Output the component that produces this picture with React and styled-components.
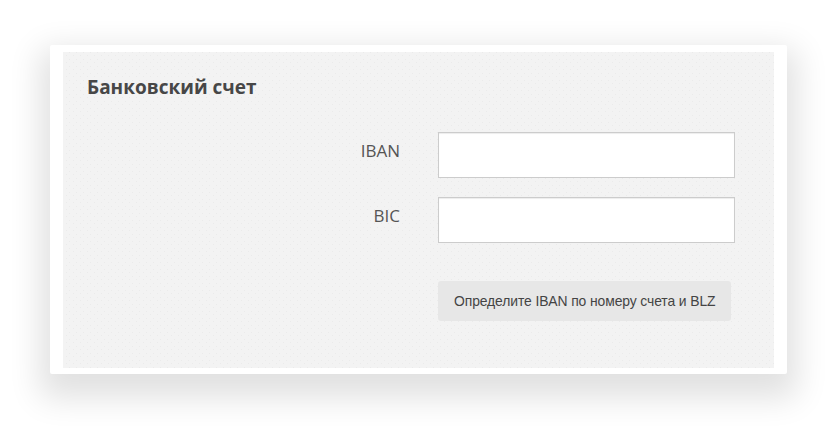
import styled, { createGlobalStyle } from "styled-components";

const Global = createGlobalStyle`
  body {
    margin: 0;
    background: #fff;
    font-family: "Open Sans", "Liberation Sans", sans-serif;
  }
`;

const Page = styled.div`
  padding: 45px 50px 54px;
`;

const Frame = styled.div`
  background: #fff;
  padding: 7px 13px 6px;
  border-radius: 2px;
  box-shadow: 0 14px 32px 10px rgba(0, 0, 0, 0.12);
`;

const Panel = styled.section`
  box-sizing: border-box;
  height: 316px;
  padding: 22px 24px 0;
  background-color: #f3f3f3;
  background-image:
    radial-gradient(circle, #ebebeb 0.6px, transparent 0.9px),
    radial-gradient(circle, #ebebeb 0.6px, transparent 0.9px);
  background-size: 7px 7px;
  background-position: 0 0, 3px 4px;
`;

const Title = styled.h2`
  margin: 0;
  font-size: 19px;
  line-height: 26px;
  font-weight: 700;
  color: #474747;
`;

const Form = styled.div`
  display: grid;
  grid-template-columns: 313px 297px;
  column-gap: 38px;
  row-gap: 19px;
  margin-top: 32px;
`;

const Label = styled.label`
  justify-self: end;
  padding-top: 7px;
  font-size: 17px;
  line-height: 23px;
  color: #555;
`;

const Input = styled.input`
  box-sizing: border-box;
  width: 297px;
  height: 46px;
  margin: 0;
  border: 1px solid #ccc;
  background: #fff;
  box-shadow: inset 0 1px 1px rgba(0, 0, 0, 0.075);
  outline: none;
`;

const Button = styled.button`
  grid-column: 2;
  justify-self: start;
  box-sizing: border-box;
  width: 293px;
  height: 40px;
  margin-top: 19px;
  padding: 0 16px;
  border: 0;
  border-radius: 3px;
  background: #e7e7e7;
  font-family: "Liberation Sans", Arial, sans-serif;
  font-size: 13.9px;
  letter-spacing: -0.1px;
  white-space: nowrap;
  color: #444;
  text-align: left;
`;

const App = () => {
  return (
    <Page>
      <Global />
      <Frame>
        <Panel>
          <Title>Банковский счет</Title>
          <Form>
            <Label htmlFor="iban">IBAN</Label>
            <Input id="iban" type="text" />
            <Label htmlFor="bic">BIC</Label>
            <Input id="bic" type="text" />
            <Button type="button">Определите IBAN по номеру счета и BLZ</Button>
          </Form>
        </Panel>
      </Frame>
    </Page>
  );
};

export default App;
